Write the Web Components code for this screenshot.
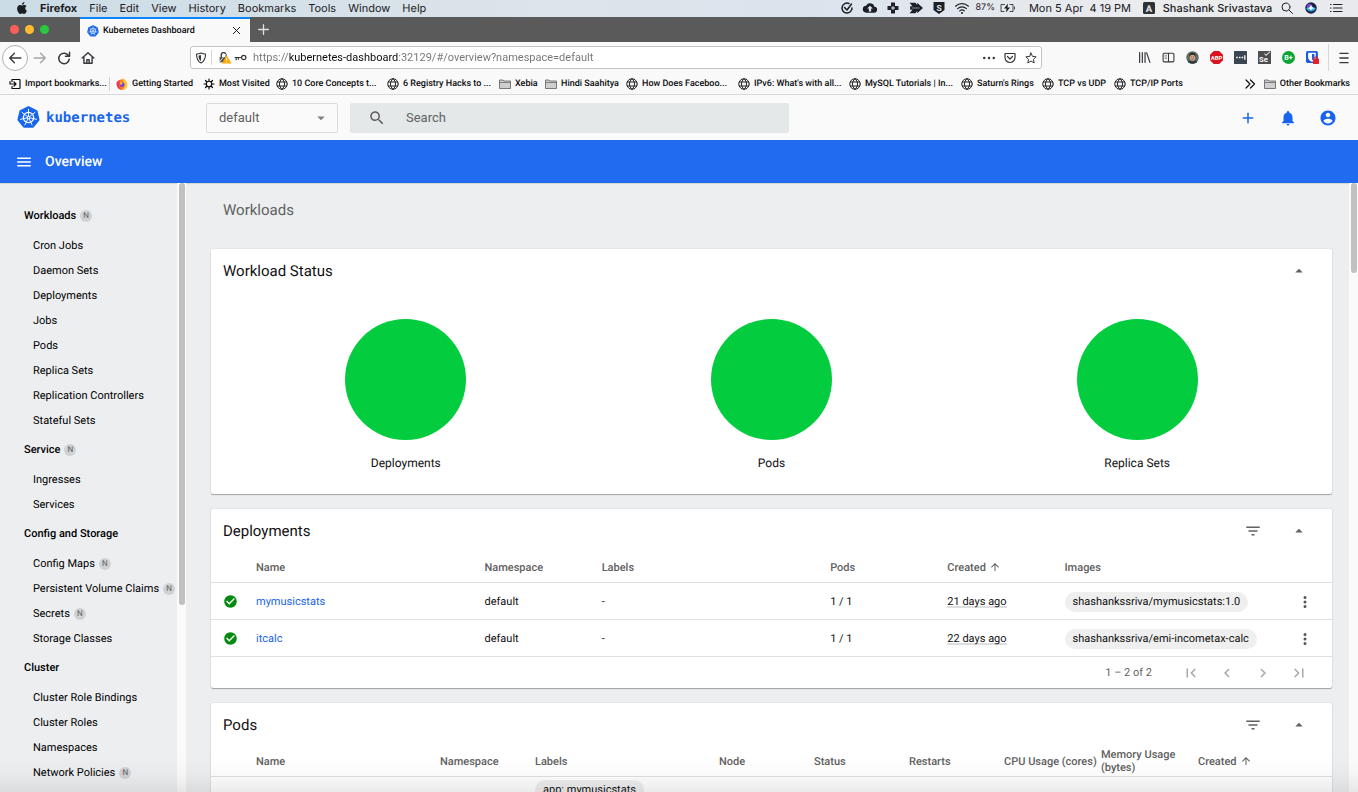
<!DOCTYPE html>
<html lang="en">
<head>
<meta charset="utf-8">
<title>Kubernetes Dashboard</title>
<style>
html, body { margin: 0; height: 100%; }
body { overflow: hidden; background: #eceef0; text-rendering: geometricPrecision; }
</style>
</head>
<body>
<dashboard-desktop></dashboard-desktop>

<script>
const define = (tag, html, setup) => {
  const template = document.createElement('template');
  customElements.define(tag, class extends HTMLElement {
    connectedCallback() {
      if (this.shadowRoot) return;
      const root = this.attachShadow({ mode: 'open' });
      template.innerHTML = '<style>*{box-sizing:border-box}button{font:inherit;color:inherit;background:none;border:0;padding:0;margin:0;display:grid;place-items:center}a{color:inherit;text-decoration:none}</style>' + (typeof html === 'function' ? html(this) : html);
      root.append(template.content.cloneNode(true));
      if (setup) setup(root, this);
    }
  });
};

/* Kubernetes mark: heptagon with a seven-spoke helm wheel */
const helm = (() => {
  const at = (r, i) => { const a = (i * 360 / 7 - 90) * Math.PI / 180; return [12 + r * Math.cos(a), 12 + r * Math.sin(a)].map(n => n.toFixed(2)).join(' '); };
  let spokes = '';
  for (let i = 0; i < 7; i++) spokes += `M${at(1.6, i)}L${at(8.6, i)}`;
  const hept = [0, 1, 2, 3, 4, 5, 6].map(i => at(10.6, i)).join('L');
  return `<path d="M${hept}Z" fill="#1765ee" stroke="#1765ee" stroke-width="2.4" stroke-linejoin="round"/><circle cx="12" cy="12" r="5.4" fill="none" stroke="#fff" stroke-width="1.3"/><path d="${spokes}" stroke="#fff" stroke-width="1" stroke-linecap="round"/><circle cx="12" cy="12" r="1.7" fill="#fff"/><circle cx="12" cy="12" r=".8" fill="#1765ee"/>`;
})();
const f = d => `<path d="${d}" fill="currentColor"/>`;
const s = (d, w = 2) => `<path d="${d}" fill="none" stroke="currentColor" stroke-width="${w}" stroke-linecap="round" stroke-linejoin="round"/>`;
const label = (t, size, y, x = 12, fill = '#fff') => `<text x="${x}" y="${y}" text-anchor="middle" font-family="Roboto, sans-serif" font-weight="700" font-size="${size}" fill="${fill}">${t}</text>`;

const icons = {
  helm,
  apple: f('M12.152 6.896c-.948 0-2.415-1.078-3.96-1.04-2.04.027-3.91 1.183-4.961 3.014-2.117 3.675-.546 9.103 1.519 12.09 1.013 1.454 2.208 3.09 3.792 3.039 1.52-.065 2.09-.987 3.935-.987 1.831 0 2.35.987 3.96.948 1.637-.026 2.676-1.48 3.676-2.948 1.156-1.688 1.636-3.325 1.662-3.415-.039-.013-3.182-1.221-3.22-4.857-.026-3.04 2.48-4.494 2.597-4.559-1.429-2.09-3.623-2.324-4.39-2.376-2-.156-3.675 1.09-4.61 1.09zM15.53 3.83c.843-1.012 1.4-2.427 1.245-3.83-1.207.052-2.662.805-3.532 1.818-.78.896-1.454 2.338-1.273 3.714 1.338.104 2.715-.688 3.559-1.701'),
  tick: s('M16 3A10 10 0 1 0 22 12M7 11l5 5 9-12', 3),
  cloud: f('M19.4 10A7.5 7.5 0 0 0 5.3 8 6 6 0 0 0 6 20h13a5 5 0 0 0 .4-10z') + '<path d="M12 8l5 5h-3v5h-4v-5H7z" fill="#dce4eb"/>',
  cross: f('M8 1h8v7h7v8h-7v7H8v-7H1V8h7z') + '<path d="M12 8v8M8 12h8" stroke="#dce4eb" stroke-width="2"/>',
  arrows: f('M1 3h10l3 4V3l10 9-10 9v-4l-3 4H1l5-6H2V9h4z') + '<path d="M5 12h13" stroke="#dce4eb" stroke-width="1"/>',
  shieldS: f('M1 0h22v16l-11 8-11-8z') + label('S', 17, 18, 12, '#dce4eb'),
  wifi: s('M1 9a16 16 0 0 1 22 0M4.5 13a11 11 0 0 1 15 0M8 17a6 6 0 0 1 8 0', 2) + '<circle cx="12" cy="20.500" r="1.800" fill="currentColor"/>',
  battery: s('M7 5H0v14h6M18 5h6v14h-6M27 10v4', 1.6) + f('M14 3l-8 10h5l-1 8 8-10h-5z'),
  boxA: '<rect x="0" y="0" width="24" height="24" rx="3" fill="#2f3235"/>' + label('A', 19, 19, 12, '#e9ebed'),
  glass: s('M16 16l7 7M18 10a8 8 0 1 1-16 0 8 8 0 0 1 16 0', 2),
  siri: '<circle cx="12" cy="12" r="11.500" fill="#1c2146"/><circle cx="9" cy="9" r="5.500" fill="#7b49c8"/><path d="M2 13c6-5 14-5 20 0-5 8-15 8-20 0z" fill="#2aa9e8"/><path d="M12 6c2 5 4 6 7 7-3 0-6 1-7 4-1-3-4-4-7-4 3-1 5-2 7-7z" fill="#fff"/>',
  list: s('M7 5h17M7 12h17M7 19h17', 2.4) + s('M1 5h1M1 12h1M1 19h1', 2.4),
  close: s('M5 5l14 14M19 5L5 19', 2),
  plus: s('M12 3v18M3 12h18', 2.4),
  back: s('M22 12H3M11 4l-8 8 8 8', 2.4),
  forward: s('M2 12h19M13 4l8 8-8 8', 2.4),
  reload: s('M20 8.500A9 9 0 1 0 21 14M21.500 2v7h-7', 2.6),
  home: s('M2 12L12 3l10 9M5 11v10h14V11M10 21v-6h4v6', 2.4),
  shield: s('M12 2c3 1.500 6 2 9 2 0 8-1 14-9 18C4 18 3 12 3 4c3 0 6-.500 9-2z', 2.2) + f('M12 6c-2 1-3 1.200-5 1.400C7 12 8 15 12 18z'),
  lock: s('M6 11V8a4.500 4.500 0 0 1 9-1v3', 2.4) + '<path d="M3 11h10v10H3z" fill="#58585c"/><path d="M2 21L17 3" stroke="#fff" stroke-width="1.400"/><path d="M16 8l9 15H7z" fill="#ffa900"/><path d="M16 13v5M16 20v1.500" stroke="#fff" stroke-width="1.800"/>',
  key: s('M22 12a4 4 0 1 1-8 0 4 4 0 0 1 8 0M14 12H2M4 12v4M8 12v3', 2.2),
  dots: '<g fill="currentColor"><circle cx="2.500" cy="12" r="2.500"/><circle cx="12" cy="12" r="2.500"/><circle cx="21.500" cy="12" r="2.500"/></g>',
  pocket: s('M2 3h20v8a10 10 0 0 1-20 0zM7 9l5 5 5-5', 2.4),
  star: s('M12 2l3 6.800 7.300.8-5.400 5 1.500 7.200L12 18.200l-6.400 3.600 1.500-7.200-5.400-5L9 8.800z', 2),
  library: s('M3 3v18M8 3v18M13 3v18M16 3.500L22 21', 2.2),
  sidebar: s('M4 4h16a2 2 0 0 1 2 2v12a2 2 0 0 1-2 2H4a2 2 0 0 1-2-2V6a2 2 0 0 1 2-2zM12 4v16', 2) + s('M5.500 8h3M5.500 11h3M5.500 14h3', 1),
  face: '<circle cx="12" cy="12" r="11.500" fill="#5c6b62"/><path d="M3 20c2-4 16-4 18 0-5 5-13 5-18 0z" fill="#343c40"/><ellipse cx="12" cy="12" rx="5" ry="6.500" fill="#d0a486"/><path d="M6 10c0-9 12-9 12 0-3-4-9-4-12 0z" fill="#23211f"/><path d="M9 11h2M13 11h2M10 15h4" stroke="#3a2a22"/>',
  abp: '<path d="M7 0h10l7 7v10l-7 7H7l-7-7V7z" fill="#d9141e"/>' + label('ABP', 11, 16),
  dashes: '<rect width="24" height="24" rx="1" fill="#3b4652"/><path d="M4 12h3M9 12h3M14 12h3M20 8v8" stroke="#fff" stroke-width="2.400"/>',
  se: '<rect width="24" height="24" fill="#4c4e4f"/><path d="M12 5l3 3 7-7" fill="none" stroke="#ddd" stroke-width="2"/>' + label('Se', 14, 21, 10),
  bplus: '<circle cx="12" cy="12" r="12" fill="#06a630"/>' + label('B+', 13, 17),
  vault: '<rect width="22" height="22" rx="3" fill="#175ddc"/><path d="M4 3h14v9c0 5-7 8-7 8s-7-3-7-8z" fill="#fff"/><path d="M11 5.500h4.500V12c0 3-4.500 5-4.500 5z" fill="#175ddc"/><rect x="13" y="14" width="11" height="10" rx="1" fill="#e3202b"/><path d="M16 14v-2a3 3 0 0 1 5 0v2" fill="none" stroke="#e3202b" stroke-width="2"/>',
  burger: s('M5 4h14M5 12h14M5 20h14', 2.4),
  importer: s('M6 7V3h15a1 1 0 0 1 1 1v16a1 1 0 0 1-1 1H6v-4M2 12h12M10 8l4 4-4 4M2 7v5', 2.4),
  firefox: '<circle cx="12" cy="13" r="10.500" fill="#ff7a1a"/><path d="M14 0c5 4 9 8 8.500 14A10.500 10.500 0 0 1 12 23.500C18 20 19 12 14 9z" fill="#ffc928"/><path d="M2 6l2 2 2-4 2 4c-3 4-3 11 4 15.500C4 23-1 15 2 6z" fill="#f5305b"/><circle cx="12" cy="13" r="5" fill="#7940d8"/><path d="M8 9c3-2 6 0 5 2-2 0-3 2-1 3-3 1-6-2-4-5z" fill="#ffb52b"/>',
  gear: s('M17.500 12a5.500 5.500 0 1 1-11 0 5.500 5.500 0 0 1 11 0M12 2v4M12 18v4M2 12h4M18 12h4M5 5l3 3M16 16l3 3M19 5l-3 3M8 16l-3 3', 2.4),
  globe: s('M22.500 12a10.500 10.500 0 1 1-21 0 10.500 10.500 0 0 1 21 0M12 1.500c-7 6-7 15 0 21M12 1.500c7 6 7 15 0 21M3 8h18M3 16h18', 1.8),
  folder: '<path d="M1 4h7l2 2h13v15H1z" fill="#cfcfcf" stroke="#6b6b6b" stroke-width="1.800"/><path d="M1 9h22" stroke="#6b6b6b" stroke-width="1.600"/>',
  more: s('M4 4l8 8-8 8M13 4l8 8-8 8', 2.4),
  search: f('M15.500 14h-.79l-.28-.27C15.410 12.590 16 11.110 16 9.500 16 5.910 13.090 3 9.500 3S3 5.910 3 9.500 5.910 16 9.500 16c1.610 0 3.090-.59 4.230-1.570l.27.28v.79l5 4.990L20.490 19l-4.990-5zm-6 0C7.010 14 5 11.990 5 9.500S7.010 5 9.500 5 14 7.010 14 9.500 11.990 14 9.500 14z'),
  down: f('M7 10l5 5 5-5z'),
  up: f('M7 14l5-5 5 5z'),
  add: f('M19 13h-6v6h-2v-6H5v-2h6V5h2v6h6z'),
  bell: f('M12 22c1.100 0 2-.9 2-2h-4c0 1.100.89 2 2 2zm6-6v-5c0-3.070-1.640-5.640-4.500-6.320V4c0-.83-.67-1.500-1.500-1.500s-1.500.67-1.500 1.500v.68C7.630 5.360 6 7.920 6 11v5l-2 2v1h16v-1l-2-2z'),
  user: f('M12 2C6.480 2 2 6.480 2 12s4.480 10 10 10 10-4.480 10-10S17.520 2 12 2zm0 3c1.660 0 3 1.340 3 3s-1.340 3-3 3-3-1.340-3-3 1.340-3 3-3zm0 14.200c-2.500 0-4.710-1.280-6-3.220.03-1.990 4-3.080 6-3.080 1.990 0 5.970 1.090 6 3.080-1.290 1.940-3.500 3.220-6 3.220z'),
  menu: f('M3 18h18v-2H3v2zm0-5h18v-2H3v2zm0-7v2h18V6H3z'),
  filter: f('M10 18h4v-2h-4v2zM3 6v2h18V6H3zm3 7h12v-2H6v2z'),
  check: f('M12 2C6.480 2 2 6.480 2 12s4.480 10 10 10 10-4.480 10-10S17.520 2 12 2zm-2 15l-5-5 1.410-1.410L10 14.170l7.590-7.590L19 8l-9 9z'),
  upward: f('M4 12l1.410 1.410L11 7.830V20h2V7.830l5.580 5.590L20 12l-8-8-8 8z'),
  kebab: f('M12 8a2 2 0 1 0 0-4 2 2 0 0 0 0 4zm0 2a2 2 0 1 0 0 4 2 2 0 0 0 0-4zm0 6a2 2 0 1 0 0 4 2 2 0 0 0 0-4z'),
  first: f('M18.410 16.590L13.820 12l4.590-4.590L17 6l-6 6 6 6zM6 6h2v12H6z'),
  prev: f('M15.410 7.410L14 6l-6 6 6 6 1.410-1.410L10.830 12z'),
  next: f('M10 6L8.590 7.410 13.170 12l-4.580 4.590L10 18l6-6z'),
  last: f('M5.590 7.410L10.180 12l-4.590 4.590L7 18l6-6-6-6zM16 6h2v12h-2z')
};

define('ui-icon', el => `
<style>
:host { display: block; flex: none; width: var(--icon, 18px); height: var(--icon, 18px); }
svg { display: block; width: 100%; height: 100%; overflow: visible; }
</style>
<svg viewBox="0 0 24 24" aria-hidden="true">${icons[el.getAttribute('name')]}</svg>`);

define('mac-menubar', `
<style>
:host { display: flex; justify-content: space-between; height: 17px; padding-bottom: 1px; font: 11px/16px Inter, sans-serif; color: #1c2024;
  background: linear-gradient(90deg, #cbdce6, #dde4ea 40%, #dbe4ed 60%, #ebecee 85%, #e8eaed); --icon: 12px; box-sizing: border-box; }
nav { display: flex; align-items: center; gap: 12px; padding-left: 16px; }
nav b { font-weight: 700; }
.status { display: grid; grid-template-columns: repeat(6, 23px) 24px 20px 126px 12px 125px 14px 34px 15px; padding-right: 15px; align-items: center; justify-items: center; }
.status span { white-space: pre; }
.pct { font-size: 9px; justify-self: end; padding-right: 2px; }
.name { font-weight: 500; }
.wide { --icon: 14px; }
</style>
<nav><ui-icon name="apple"></ui-icon><b>Firefox</b><span>File</span><span>Edit</span><span>View</span><span>History</span><span>Bookmarks</span><span>Tools</span><span>Window</span><span>Help</span></nav>
<div class="status">
<ui-icon name="tick"></ui-icon><ui-icon class="wide" name="cloud"></ui-icon><ui-icon name="cross"></ui-icon><ui-icon class="wide" name="arrows"></ui-icon><ui-icon name="shieldS"></ui-icon><ui-icon class="wide" name="wifi"></ui-icon>
<span class="pct">87%</span><ui-icon name="battery"></ui-icon><span>Mon 5 Apr  4 19 PM</span><ui-icon name="boxA"></ui-icon><span class="name">Shashank Srivastava</span><ui-icon name="glass"></ui-icon><ui-icon name="siri"></ui-icon><ui-icon name="list"></ui-icon>
</div>`);

define('browser-tabs', `
<style>
:host { display: flex; height: 25px; background: #5b5a5a; font: 500 9px/12px Roboto, sans-serif; color: #0c0c0d; }
.lights { width: 80px; display: flex; align-items: center; gap: 6px; padding-left: 10px; }
.lights i { width: 9px; height: 9px; border-radius: 50%; background: var(--c); }
.tab { width: 170px; display: flex; align-items: center; gap: 4px; padding: 0 8px 0 7px; background: #f9f9fa; border-top: 2px solid #0a84ff; --icon: 12px; }
.tab span { flex: 1; }
.tab button { --icon: 11px; }
.new { width: 26px; color: #e0e0e0; --icon: 13px; }
</style>
<div class="lights"><i style="--c:#ff5f57"></i><i style="--c:#febc2e"></i><i style="--c:#28c840"></i></div>
<div class="tab"><ui-icon name="helm"></ui-icon><span>Kubernetes Dashboard</span><button aria-label="Close tab"><ui-icon name="close"></ui-icon></button></div>
<button class="new" aria-label="New tab"><ui-icon name="plus"></ui-icon></button>`);

define('browser-toolbar', `
<style>
:host { display: flex; align-items: center; height: 31px; background: #f9f9fa; color: #38383d; --icon: 14px; }
.nav { display: flex; width: 190px; padding-left: 2px; align-items: center; }
.nav button { width: 24px; height: 25px; }
.nav .back { width: 26px; height: 26px; border: 1px solid #b1b1b3; border-radius: 50%; background: #fff; }
.nav .off { color: #a6a6a8; }
form { flex: 1; display: flex; align-items: center; height: 23px; margin-right: 90px; background: #fff; border: 1px solid #c4c4c6; border-radius: 3px; --icon: 12px; }
.mark { width: 21px; height: 15px; border-right: 1px solid #d7d7db; }
.site { display: flex; gap: 3px; padding: 0 6px; --icon: 13px; }
input { flex: 1; min-width: 0; border: 0; padding: 0; outline: 0; font: 11px/16px Roboto, sans-serif; color: transparent;
  background: linear-gradient(90deg, #737378 35px, #0c0c0d 35px, #0c0c0d 146px, #737378 146px); -webkit-background-clip: text; background-clip: text; }
.tools { display: flex; gap: 9px; padding-right: 4px; --icon: 12px; }
.ext { display: flex; --icon: 13px; }
.ext button { width: 24px; height: 24px; }
.app { margin-left: 4px; padding: 0 7px 0 8px; height: 27px; border-left: 1px solid #d7d7db; }
</style>
<div class="nav"><button class="back" aria-label="Back"><ui-icon name="back"></ui-icon></button><button class="off" aria-label="Forward"><ui-icon name="forward"></ui-icon></button><button aria-label="Reload"><ui-icon name="reload"></ui-icon></button><button aria-label="Home"><ui-icon name="home"></ui-icon></button></div>
<form><button type="button" class="mark" aria-label="Tracking protection"><ui-icon name="shield"></ui-icon></button><div class="site"><ui-icon name="lock"></ui-icon><ui-icon name="key"></ui-icon></div>
<input type="text" aria-label="Address" value="https://kubernetes-dashboard:32129/#/overview?namespace=default">
<div class="tools"><button type="button" aria-label="Page actions"><ui-icon name="dots"></ui-icon></button><button type="button" aria-label="Save to Pocket"><ui-icon name="pocket"></ui-icon></button><button type="button" aria-label="Bookmark"><ui-icon name="star"></ui-icon></button></div></form>
<div class="ext">${['library', 'sidebar', 'face', 'abp', 'dashes', 'se', 'bplus', 'vault'].map(n => `<button aria-label="${n}"><ui-icon name="${n}"></ui-icon></button>`).join('')}</div>
<button class="app" aria-label="Menu"><ui-icon name="burger"></ui-icon></button>`);

define('bookmark-link', el => `
<style>
:host { display: flex; }
a { display: flex; align-items: center; gap: 4px; white-space: nowrap; --icon: 12px; }
</style>
<a href="#"><ui-icon name="${el.getAttribute('icon')}"></ui-icon><slot></slot></a>`);

define('bookmarks-bar', `
<style>
:host { display: flex; justify-content: space-between; height: 22px; padding: 0 8px 0 9px; background: #f9f9fa; border-bottom: 1px solid #d9d9db; font: 500 9px/12px Roboto, sans-serif; color: #0c0c0d; box-sizing: border-box; }
.items { display: grid; grid-template-columns: 100px 7px 87px 73px 111px 112px 46px 81px 112px 111px 112px 81px 72px 70px; align-items: center; }
hr { width: 1px; height: 14px; margin: 0; border: 0; background: #cfcfd1; }
.rest { display: flex; align-items: center; gap: 8px; --icon: 12px; }
</style>
<div class="items">
<bookmark-link icon="importer">Import bookmarks...</bookmark-link><hr>
<bookmark-link icon="firefox">Getting Started</bookmark-link>
<bookmark-link icon="gear">Most Visited</bookmark-link>
<bookmark-link icon="globe">10 Core Concepts t...</bookmark-link>
<bookmark-link icon="globe">6 Registry Hacks to ...</bookmark-link>
<bookmark-link icon="folder">Xebia</bookmark-link>
<bookmark-link icon="folder">Hindi Saahitya</bookmark-link>
<bookmark-link icon="globe">How Does Faceboo...</bookmark-link>
<bookmark-link icon="globe">IPv6: What's with all...</bookmark-link>
<bookmark-link icon="globe">MySQL Tutorials | In...</bookmark-link>
<bookmark-link icon="globe">Saturn's Rings</bookmark-link>
<bookmark-link icon="globe">TCP vs UDP</bookmark-link>
<bookmark-link icon="globe">TCP/IP Ports</bookmark-link>
</div>
<div class="rest"><button aria-label="More bookmarks"><ui-icon name="more"></ui-icon></button><bookmark-link icon="folder">Other Bookmarks</bookmark-link></div>`);

define('app-header', `
<style>
:host { display: grid; grid-template-columns: 206px 132px 12px 1fr 1fr 120px; align-items: center; height: 45px; padding-right: 10px; background: #fafafa; font: 13px/16px Roboto, sans-serif; color: #5f5f5f; }
.brand { display: flex; align-items: center; gap: 6px; padding-left: 17px; font: 700 14px/16px "DejaVu Sans Mono", monospace; color: #1765ee; --icon: 23px; }
.ns { display: grid; align-items: center; height: 30px; border: 1px solid #dcdcdc; border-radius: 2px; }
.ns > * { grid-area: 1 / 1; }
.ns ui-icon { justify-self: end; margin-right: 7px; --icon: 18px; pointer-events: none; color: #808080; }
select { appearance: none; width: 100%; height: 100%; border: 0; padding: 0 12px; background: none; font: inherit; color: inherit; }
.search { grid-column: 4; display: flex; align-items: center; gap: 20px; height: 30px; padding: 0 18px; background: #e4e8e9; border-radius: 2px; }
input { flex: 1; min-width: 0; border: 0; outline: 0; padding: 0; background: none; font: inherit; color: inherit; }
input::placeholder { color: #616365; opacity: 1; }
.actions { grid-column: 6; display: flex; color: #1765ee; }
.actions button { width: 40px; height: 40px; }
</style>
<a class="brand" href="#"><ui-icon name="helm"></ui-icon>kubernetes</a>
<div class="ns"><select aria-label="Namespace"><option>default</option></select><ui-icon name="down"></ui-icon></div>
<label class="search"><ui-icon name="search"></ui-icon><input type="search" aria-label="Search" placeholder="Search"></label>
<div class="actions"><button aria-label="Create"><ui-icon name="add"></ui-icon></button><button aria-label="Notifications"><ui-icon name="bell"></ui-icon></button><button aria-label="Account"><ui-icon name="user"></ui-icon></button></div>`);

define('app-toolbar', `
<style>
:host { display: flex; align-items: center; gap: 12px; height: 43px; padding-left: 15px; background: #206bef; color: #fff; }
h1 { margin: 0; font: 500 14px/20px Roboto, sans-serif; }
</style>
<button aria-label="Toggle navigation"><ui-icon name="menu"></ui-icon></button><h1><slot></slot></h1>`);

define('nav-link', el => `
<style>
:host { display: flex; align-items: center; height: 25px; padding-left: 33px; }
:host([category]) { height: 34px; padding-left: 24px; font-weight: 500; }
a { display: flex; align-items: center; gap: 4px; white-space: nowrap; }
.badge { display: grid; place-items: center; width: 12px; height: 12px; border-radius: 50%; background: #d0d1d2; color: #5e5e5e; font: 8px/12px Roboto, sans-serif; }
</style>
<a href="#"><slot></slot>${el.hasAttribute('namespaced') ? '<span class="badge">N</span>' : ''}</a>`);

define('scroll-track', `
<style>
:host { display: block; width: 9px; background: #fafafa; }
div { width: 6px; height: var(--thumb); margin: 0 auto; border-radius: 3px; background: #c1c1c1; }
</style><div></div>`);

define('side-nav', `
<style>
:host { display: flex; width: 186px; overflow: hidden; font: 11px/16px Roboto, sans-serif; color: #000; }
nav { flex: 1; padding-top: 16px; min-width: 0; }
scroll-track { --thumb: 422px; }
</style>
<nav>
<nav-link category namespaced>Workloads</nav-link>
<nav-link>Cron Jobs</nav-link><nav-link>Daemon Sets</nav-link><nav-link>Deployments</nav-link><nav-link>Jobs</nav-link><nav-link>Pods</nav-link><nav-link>Replica Sets</nav-link><nav-link>Replication Controllers</nav-link><nav-link>Stateful Sets</nav-link>
<nav-link category namespaced>Service</nav-link>
<nav-link>Ingresses</nav-link><nav-link>Services</nav-link>
<nav-link category>Config and Storage</nav-link>
<nav-link namespaced>Config Maps</nav-link><nav-link namespaced>Persistent Volume Claims</nav-link><nav-link namespaced>Secrets</nav-link><nav-link>Storage Classes</nav-link>
<nav-link category>Cluster</nav-link>
<nav-link>Cluster Role Bindings</nav-link><nav-link>Cluster Roles</nav-link><nav-link>Namespaces</nav-link><nav-link namespaced>Network Policies</nav-link>
</nav><scroll-track></scroll-track>`);

define('dash-card', el => `
<style>
:host { display: block; margin-bottom: 15px; background: #fff; border-radius: 2px; box-shadow: 0 1px 1px rgba(0,0,0,.3), 0 0 2px rgba(0,0,0,.12); }
header { display: flex; align-items: center; height: 43px; padding: 0 24px 0 12px; }
h2 { flex: 1; margin: 0; font: 15px/20px Roboto, sans-serif; color: #111; }
.tools { display: flex; gap: 28px; color: #616161; }
</style>
<header><h2>${el.getAttribute('heading')}</h2><div class="tools">${el.hasAttribute('filter') ? '<button aria-label="Filter"><ui-icon name="filter"></ui-icon></button>' : ''}<button aria-label="Collapse"><ui-icon name="up"></ui-icon></button></div></header>
<slot></slot>`);

define('status-chart', `
<style>
:host { display: flex; flex-direction: column; align-items: center; gap: 13px; font: 12px/20px Roboto, sans-serif; color: #111; }
i { width: 121px; height: 121px; border-radius: 50%; background: #03cd3e; }
</style>
<i></i><slot></slot>`);

define('resource-chip', `
<style>
:host { display: inline-block; height: 20px; padding: 0 8px; border-radius: 10px; background: #efefef; line-height: 20px; white-space: nowrap; }
</style><slot></slot>`);

const tableStyle = `
<style>
:host { display: block; font: 11px/13px Roboto, sans-serif; color: #111; }
table, thead, tbody { display: block; }
tr { display: grid; grid-template-columns: 45px var(--cols) 39px; align-items: center; min-height: 37px; border-bottom: 1px solid #e0e0e0; }
thead tr { min-height: 31px; }
tbody tr { padding-top: 1px; }
th { display: flex; align-items: center; gap: 3px; padding: 0; text-align: left; font-weight: 500; color: #616161; --icon: 12px; }
td { display: flex; align-items: center; padding: 0; }
th:first-child, td:first-child { padding-left: 12px; }
td a { color: #1765ee; }
td button { width: 24px; height: 20px; color: #555; }
.ok { color: #048a11; --icon: 15px; }
.age { height: 12px; line-height: 12px; box-shadow: inset 0 -2px #dedede; }
</style>`;

define('deployments-table', `${tableStyle}
<style>
:host { --cols: 39fr 20fr 39fr 20fr 20fr 39fr; }
footer { display: flex; align-items: center; justify-content: flex-end; height: 31px; padding-right: 24px; gap: 18px; color: #616161; }
footer button { color: #a8a8a8; }
footer span { margin-right: 12px; }
</style>
<table><thead><tr><th></th><th>Name</th><th>Namespace</th><th>Labels</th><th>Pods</th><th>Created <ui-icon name="upward"></ui-icon></th><th>Images</th><th></th></tr></thead>
<tbody>${[['mymusicstats', '21', 'mymusicstats:1.0'], ['itcalc', '22', 'emi-incometax-calc']].map(([n, d, i]) => `
<tr><td class="ok"><ui-icon name="check"></ui-icon></td><td><a href="#">${n}</a></td><td>default</td><td>-</td><td>1 / 1</td><td><span class="age">${d} days ago</span></td><td><resource-chip>shashankssriva/${i}</resource-chip></td><td><button aria-label="Actions for ${n}"><ui-icon name="kebab"></ui-icon></button></td></tr>`).join('')}
</tbody></table>
<footer><span>1 – 2 of 2</span><button aria-label="First page"><ui-icon name="first"></ui-icon></button><button aria-label="Previous page"><ui-icon name="prev"></ui-icon></button><button aria-label="Next page"><ui-icon name="next"></ui-icon></button><button aria-label="Last page"><ui-icon name="last"></ui-icon></button></footer>`);

define('pods-table', `${tableStyle}
<style>
:host { --cols: 184fr 95fr 184fr 95fr 95fr 95fr 97fr 97fr 95fr; }
th { white-space: nowrap; }
.wrap { white-space: normal; }
tbody tr { padding-top: 3px; align-items: start; }
</style>
<table><thead><tr><th></th><th>Name</th><th>Namespace</th><th>Labels</th><th>Node</th><th>Status</th><th>Restarts</th><th>CPU Usage (cores)</th><th class="wrap">Memory Usage (bytes)</th><th>Created <ui-icon name="upward"></ui-icon></th><th></th></tr></thead>
<tbody><tr><td></td><td></td><td></td><td><resource-chip>app: mymusicstats</resource-chip></td><td></td><td></td><td></td><td></td><td></td><td></td><td></td></tr></tbody></table>`);

define('overview-page', `
<style>
:host { display: flex; flex: 1; min-width: 0; overflow: hidden; }
main { flex: 1; min-width: 0; padding: 0 17px 0 25px; }
.section { margin: 0; padding: 17px 12px 29px; font: 15px/20px Roboto, sans-serif; color: #616161; }
.charts { display: grid; grid-template-columns: repeat(3, 1fr); padding: 27px 12px 21px; }
scroll-track { --thumb: 90px; }
</style>
<main>
<p class="section">Workloads</p>
<dash-card heading="Workload Status"><div class="charts"><status-chart>Deployments</status-chart><status-chart>Pods</status-chart><status-chart>Replica Sets</status-chart></div></dash-card>
<dash-card heading="Deployments" filter><deployments-table></deployments-table></dash-card>
<dash-card heading="Pods" filter><pods-table></pods-table></dash-card>
</main><scroll-track></scroll-track>`);

define('dashboard-desktop', `
<style>
:host { display: flex; flex-direction: column; height: 100vh; background: #eceef0; position: relative; }
:host > * { flex: none; }
.body { flex: 1; min-height: 0; display: flex; box-shadow: inset 0 1px #d8d5ca; }
.shade { position: absolute; left: 0; right: 0; bottom: 0; height: 36px; background: linear-gradient(rgba(0,0,0,0), rgba(0,0,0,.02) 50%, rgba(0,0,0,.08)); pointer-events: none; }
</style>
<mac-menubar></mac-menubar>
<browser-tabs></browser-tabs>
<browser-toolbar></browser-toolbar>
<bookmarks-bar></bookmarks-bar>
<app-header></app-header>
<app-toolbar>Overview</app-toolbar>
<div class="body"><side-nav></side-nav><overview-page></overview-page></div>
<div class="shade"></div>`);
</script>
</body>
</html>
